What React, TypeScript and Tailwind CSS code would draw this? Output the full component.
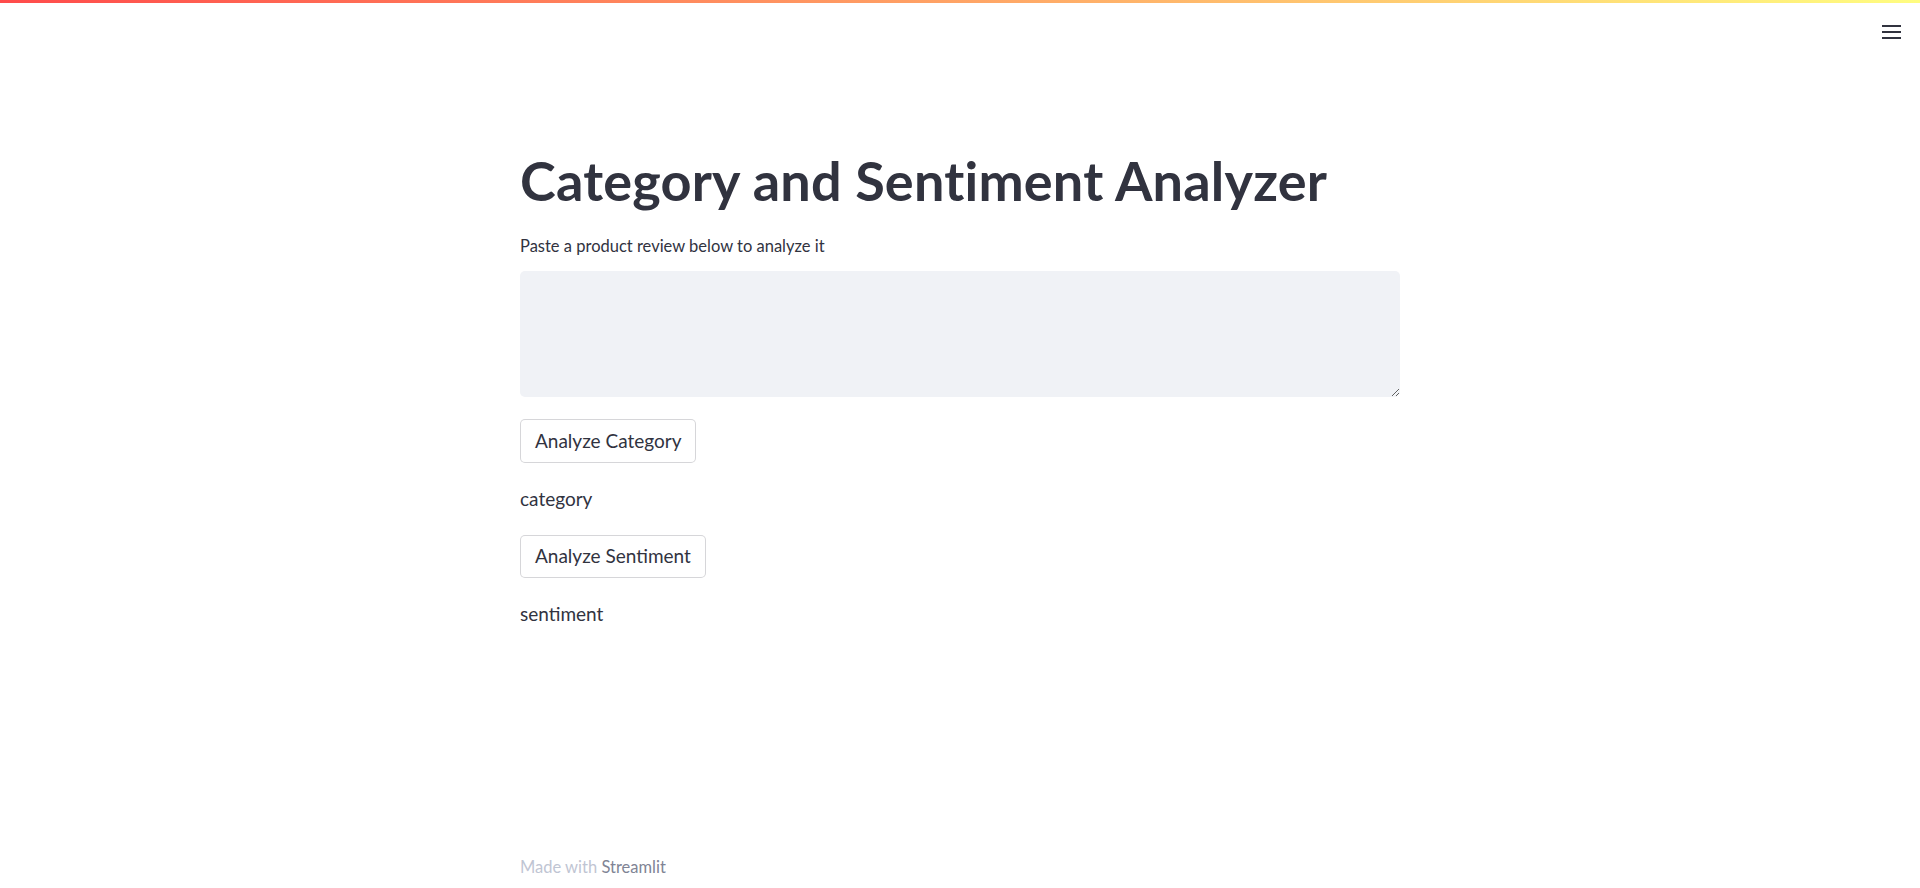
import React, { useState } from "react";

export default function App() {
  const [review, setReview] = useState("");

  return (
    <div className="relative min-h-[888px] bg-white font-['Lato','Noto_Sans',sans-serif] text-[#31333f]">
      {/* top decoration + menu */}
      <div className="fixed left-0 right-0 top-0 z-10 h-[3px] bg-[linear-gradient(90deg,#ff4b4b,#fffd80)]"></div>
      <button className="fixed right-[18px] top-[22px] z-10 flex h-[20px] w-[22px] flex-col items-center justify-center gap-[4px]">
        <span className="block h-[2px] w-[19px] bg-[#31333f]"></span>
        <span className="block h-[2px] w-[19px] bg-[#31333f]"></span>
        <span className="block h-[2px] w-[19px] bg-[#31333f]"></span>
      </button>

      <main className="mx-auto flex w-[880px] flex-col pt-[149px]">
        <h1 className="text-[54px] font-bold leading-[63px] tracking-[0.2px]">Category and Sentiment Analyzer</h1>

        <label className="mt-[24px] text-[16.5px] leading-[20px]">Paste a product review below to analyze it</label>
        <textarea
          value={review}
          onChange={(e) => setReview(e.target.value)}
          className="mt-[15px] h-[126px] w-full rounded-[5px] bg-[#f0f2f6] px-4 py-3 text-[19px] outline-none"
        />

        <div className="mt-[22px]">
          <button className="h-[44px] rounded-[5px] border border-[rgba(49,51,63,0.2)] bg-white px-[14px] text-[19px]">Analyze Category</button>
        </div>
        <p className="mt-[24px] text-[19px] leading-[24px]">category</p>

        <div className="mt-[24px]">
          <button className="h-[43px] rounded-[5px] border border-[rgba(49,51,63,0.2)] bg-white px-[14px] text-[19px]">Analyze Sentiment</button>
        </div>
        <p className="mt-[24px] text-[19px] leading-[24px]">sentiment</p>

        <footer className="mt-[231px] text-[16.5px] leading-[20px] text-[#bfc5d3]">
          Made with <span className="text-[#808495]">Streamlit</span>
        </footer>
      </main>
    </div>
  );
}
